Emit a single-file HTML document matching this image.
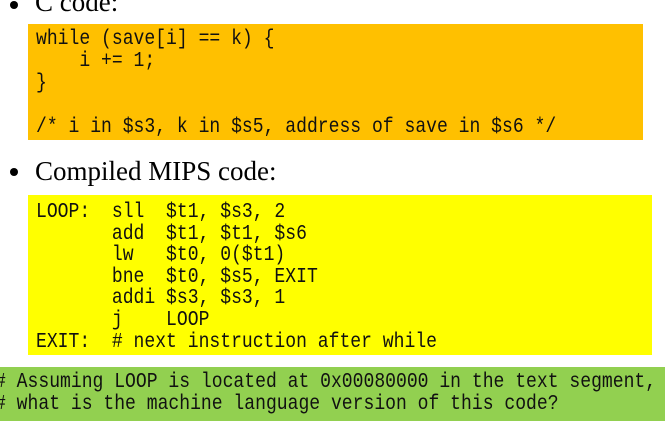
<!DOCTYPE html>
<html><head><style>
body{margin:0;width:665px;height:425px;overflow:hidden;background:#fff;position:relative}
.h{position:absolute;left:35px;font-family:"Liberation Serif",serif;font-size:27px;color:#000;line-height:30px;white-space:nowrap}
.b{position:absolute;left:10px;width:8px;height:8px;border-radius:50%;background:#000}
.box{position:absolute}
pre{position:absolute;margin:0;font-family:"Liberation Mono",monospace;font-size:21px;color:#111;white-space:pre;transform:scaleX(0.86);transform-origin:0 0}
</style></head><body>
<div class="b" style="top:1px"></div>
<div class="h" style="top:-13px">C code:</div>
<div class="box" style="left:28px;top:24px;width:615px;height:116px;background:#ffc000">
<pre style="left:8px;top:5px;line-height:22px">while (save[i] == k) {
    i += 1;
}

/* i in $s3, k in $s5, address of save in $s6 */</pre></div>
<div class="b" style="top:168px"></div>
<div class="h" style="top:156px">Compiled MIPS code:</div>
<div class="box" style="left:28px;top:195px;width:624px;height:160px;background:#ffff00">
<pre style="left:8px;top:7px;line-height:21.6px">LOOP:  sll  $t1, $s3, 2
       add  $t1, $t1, $s6
       lw   $t0, 0($t1)
       bne  $t0, $s5, EXIT
       addi $s3, $s3, 1
       j    LOOP
EXIT:  # next instruction after while</pre></div>
<div class="box" style="left:0;top:367px;width:665px;height:54px;background:#92d050">
<pre style="left:-5px;top:5px;line-height:22px"># Assuming LOOP is located at 0x00080000 in the text segment,
# what is the machine language version of this code?</pre></div>
</body></html>
